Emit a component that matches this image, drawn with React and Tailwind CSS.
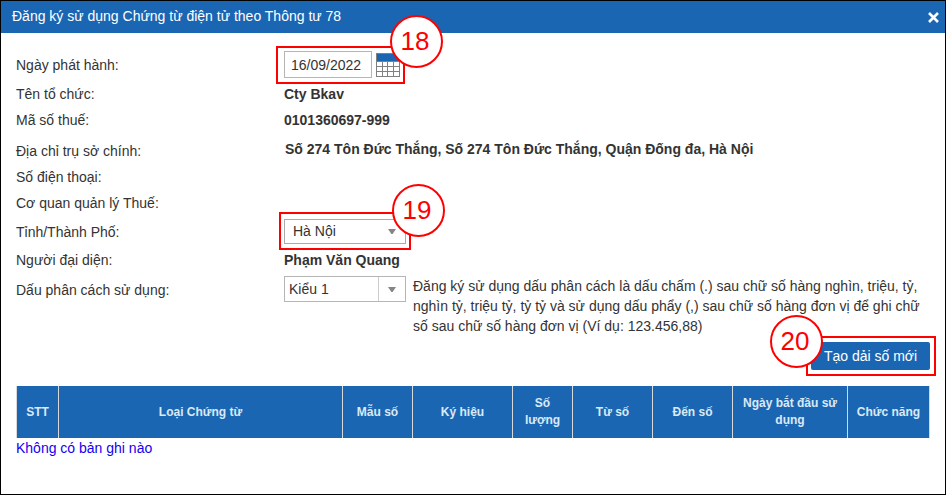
function Callout({ n, className }) {
  return (
    <div className={`absolute z-10 flex h-[53px] w-[53px] items-center justify-center rounded-full border-2 border-[#ff0000] bg-white text-[#ff0000] ${className}`}>
      <span className="pr-[3px] pb-[2px] text-[26px] leading-none">{n}</span>
    </div>
  );
}

function Row({ label, labelClass = "", className, children }) {
  return (
    <div className={`flex items-center ${className}`}>
      <div className={`w-[268px] shrink-0 ${labelClass}`}>{label}</div>
      {children}
    </div>
  );
}

const calendarCells = [[1, 5], [7, 4], [12, 5], [18, 5]];

function Calendar() {
  return (
    <svg width="24" height="24" viewBox="0 0 24 24" shapeRendering="crispEdges">
      <rect width="24" height="24" fill="#808080" />
      <rect x="1" y="1" width="22" height="7" fill="#1a66b3" />
      {[9, 14, 19].map((y) =>
        calendarCells.map(([x, w]) => (
          <rect key={`${x}-${y}`} x={x} y={y} width={w} height="4" fill="#fff" />
        ))
      )}
    </svg>
  );
}

function Arrow() {
  return (
    <svg width="8" height="5" viewBox="0 0 8 5">
      <path d="M0 0h8L4.6 5H3.4z" fill="#858585" />
    </svg>
  );
}

const columns = [
  ["STT", "w-[42px]"],
  ["Loại Chứng từ", "w-[284px]"],
  ["Mẫu số", "w-[70px]"],
  ["Ký hiệu", "w-[100px]"],
  ["Số lượng", "w-[60px]"],
  ["Từ số", "w-[80px]"],
  ["Đến số", "w-[80px]"],
  ["Ngày bắt đầu sử dụng", "w-[115px]"],
  ["Chức năng", "w-[82px]"],
];

export default function App() {
  return (
    <div className="h-[495px] w-[946px] overflow-hidden border border-black bg-white font-['Liberation_Sans',Arial,sans-serif] text-[14px] leading-5 text-[#333]">
      <header className="flex h-8 items-center justify-between bg-[#1a66b3] pr-[6px] pl-[11px] text-white">
        <span className="pb-[2px]">Đăng ký sử dụng Chứng từ điện tử theo Thông tư 78</span>
        <svg width="11" height="11" viewBox="0 0 11 11" className="mt-px">
          <path d="M1 1l9 9M10 1l-9 9" stroke="#fff" strokeWidth="2.6" />
        </svg>
      </header>
      <main className="flex flex-col pt-[17px] pr-[15px] pl-[15px]">
        <Row label="Ngày phát hành:" className="h-[30px]">
          <div className="relative mb-px flex items-center gap-1">
            <div className="flex h-[27px] w-[88px] items-center border border-[#b5b5b5] pl-[6px]">16/09/2022</div>
            <Calendar />
            <div className="absolute -top-[5px] -left-2 h-[38px] w-[129px] border-2 border-[#ff0000]" />
            <Callout n="18" className="-top-[36px] left-[106px]" />
          </div>
        </Row>
        <Row label="Tên tổ chức:" className="h-[27px]"><b>Cty Bkav</b></Row>
        <Row label="Mã số thuế:" className="h-[26px]"><b>0101360697-999</b></Row>
        <Row label="Địa chỉ trụ sở chính:" className="mt-[5px] h-[26px]">
          <b className="-mt-1 pl-px">Số 274 Tôn Đức Thắng, Số 274 Tôn Đức Thắng, Quận Đống đa, Hà Nội</b>
        </Row>
        <Row label="Số điện thoại:" className="h-[26px]" />
        <Row label="Cơ quan quản lý Thuế:" className="h-[26px]" />
        <Row label="Tỉnh/Thành Phố:" labelClass="pt-[2px]" className="h-[30px]">
          <div className="relative mt-px flex h-[25px] w-[122px] items-center justify-between border border-[#aaa] pr-[9px] pl-2">
            <span className="pb-px">Hà Nội</span>
            <Arrow />
            <div className="absolute -top-[8px] -left-[6px] h-[38px] w-[132px] border-2 border-[#ff0000]" />
            <Callout n="19" className="-top-[36px] left-[107px]" />
          </div>
        </Row>
        <Row label="Người đại diện:" className="h-[28px]"><b>Phạm Văn Quang</b></Row>
        <div className="flex h-[68px] items-start pt-[2px]">
          <div className="w-[268px] shrink-0 pt-1">Dấu phân cách sử dụng:</div>
          <div className="flex h-[26px] w-[122px] shrink-0 border border-[#b5b5b5]">
            <span className="flex-1 pt-[2px] pl-1">Kiểu 1</span>
            <span className="flex w-[27px] items-center justify-center border-l border-[#ccc]"><Arrow /></span>
          </div>
          <p className="pl-[7px] whitespace-nowrap">
            Đăng ký sử dụng dấu phân cách là dấu chấm (.) sau chữ số hàng nghìn, triệu, tỷ,<br />
            nghìn tỷ, triệu tỷ, tỷ tỷ và sử dụng dấu phẩy (,) sau chữ số hàng đơn vị để ghi chữ<br />
            số sau chữ số hàng đơn vị (Ví dụ: 123.456,88)
          </p>
        </div>
        <div className="relative flex h-7 w-[119px] items-center justify-center self-end rounded-[2px] bg-[#1a66b3] text-white">
          <span>Tạo dải số mới</span>
          <div className="absolute -top-[6px] -left-[5px] h-10 w-[130px] border-2 border-[#ff0000]" />
          <Callout n="20" className="-top-[27px] -left-[41px]" />
        </div>
        <div className="mt-4 flex h-[52px] w-[914px] border-l border-[#d8d8d8] bg-[#1a66b3] text-center text-[12px] leading-[17px] font-bold text-[#dbe9f5]">
          {columns.map(([name, width]) => (
            <div key={name} className={`flex shrink-0 items-center justify-center border-r border-[#d8d8d8] px-1 ${width}`}>{name}</div>
          ))}
        </div>
        <div className="text-[#1500f0]">Không có bản ghi nào</div>
      </main>
    </div>
  );
}
